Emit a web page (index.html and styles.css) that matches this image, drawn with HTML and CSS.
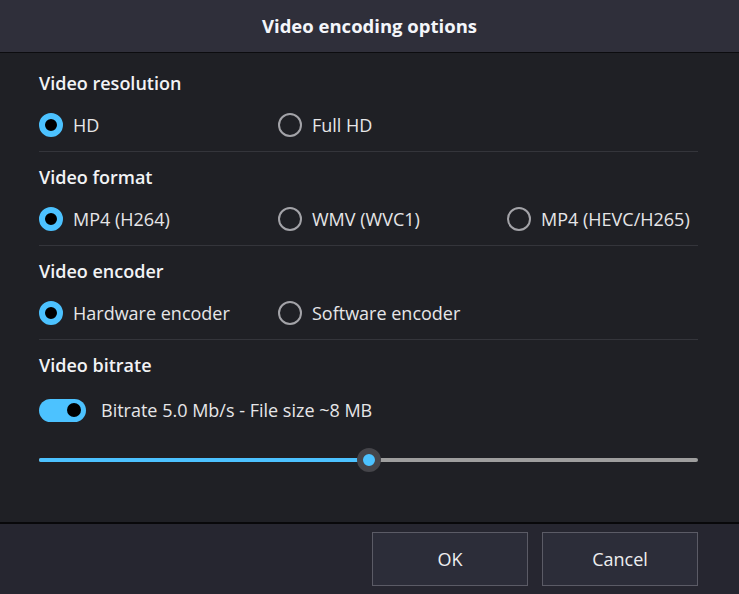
FILE: index.html
```html
<!DOCTYPE html>
<html lang="en">
<head>
    <meta charset="UTF-8">
    <meta name="viewport" content="width=device-width, initial-scale=1.0">
    <title>Video encoding options</title>
    <link rel="stylesheet" href="styles.css">
</head>
<body>
    <div class="dialog">
        <div class="header">Video encoding options</div>

        <div class="content">
            <!-- Resolution -->
            <div class="section">
                <h3>Video resolution</h3>
                <div class="options">
                    <label class="radio checked"><span class="dot"></span>HD</label>
                    <label class="radio"><span class="dot"></span>Full HD</label>
                </div>
            </div>

            <!-- Format -->
            <div class="section">
                <h3>Video format</h3>
                <div class="options">
                    <label class="radio checked"><span class="dot"></span>MP4 (H264)</label>
                    <label class="radio"><span class="dot"></span>WMV (WVC1)</label>
                    <label class="radio"><span class="dot"></span>MP4 (HEVC/H265)</label>
                </div>
            </div>

            <!-- Encoder -->
            <div class="section">
                <h3>Video encoder</h3>
                <div class="options">
                    <label class="radio checked"><span class="dot"></span>Hardware encoder</label>
                    <label class="radio"><span class="dot"></span>Software encoder</label>
                </div>
            </div>

            <!-- Bitrate -->
            <div class="section last">
                <h3>Video bitrate</h3>
                <div class="toggle-row">
                    <span class="toggle"><span class="knob"></span></span>
                    Bitrate 5.0 Mb/s - File size ~8 MB
                </div>
                <div class="slider">
                    <div class="fill" style="width: 50%"></div>
                    <div class="thumb"></div>
                </div>
            </div>
        </div>

        <div class="footer">
            <button>OK</button>
            <button>Cancel</button>
        </div>
    </div>
</body>
</html>
```

FILE: styles.css
```css
body {
    margin: 0;
    background-color: #1f2025;
    font-family: "Open Sans", "Noto Sans", sans-serif;
    color: #e6e6e8;
}
.dialog {
    width: 739px;
    height: 594px;
    display: flex;
    flex-direction: column;
}
.header {
    height: 52px;
    line-height: 52px;
    background-color: #2f2f3a;
    border-bottom: 1px solid #0c0c0f;
    text-align: center;
    font-size: 18.5px;
    font-weight: 700;
    color: #f4f6fa;
}
.content {
    flex: 1;
    padding: 5px 41px 0 39px;
}
.section {
    padding: 13px 0 12px;
    border-bottom: 1px solid #34353b;
}
.section.last {
    border-bottom: none;
}
h3 {
    margin: 0;
    font-size: 18px;
    line-height: 24px;
    font-weight: 600;
    color: #f2f3f5;
}
.options {
    display: grid;
    grid-template-columns: 239px 229px 1fr;
    margin-top: 16px;
}
.radio {
    display: flex;
    align-items: center;
    gap: 10px;
    height: 28px;
    font-size: 18px;
}
.dot {
    box-sizing: border-box;
    flex: none;
    width: 24px;
    height: 24px;
    border-radius: 50%;
    border: 2px solid #a3a3a8;
}
.radio.checked .dot {
    border: 6px solid #4cc2ff;
    background-color: #000;
}
.toggle-row {
    display: flex;
    align-items: center;
    gap: 15px;
    height: 28px;
    margin-top: 19px;
    font-size: 18px;
}
.toggle {
    width: 47px;
    height: 23px;
    border-radius: 12px;
    background-color: #4cc2ff;
    display: flex;
    align-items: center;
    justify-content: flex-end;
    padding-right: 5px;
    box-sizing: border-box;
}
.knob {
    width: 14px;
    height: 14px;
    border-radius: 50%;
    background-color: #000;
}
.slider {
    position: relative;
    height: 4px;
    margin-top: 34px;
    border-radius: 2px;
    background-color: #9e9e9e;
}
.fill {
    height: 4px;
    border-radius: 2px;
    background-color: #4cc2ff;
}
.thumb {
    position: absolute;
    left: 50%;
    top: 50%;
    width: 12px;
    height: 12px;
    margin: -12px 0 0 -12px;
    border: 6px solid #45454a;
    border-radius: 50%;
    background-color: #4cc2ff;
}
.footer {
    height: 72px;
    border-top: 2px solid #08080a;
    background-color: #262630;
    display: flex;
    justify-content: flex-end;
    align-items: flex-start;
    gap: 14px;
    padding: 8px 41px 0 0;
    box-sizing: border-box;
}
button {
    width: 156px;
    height: 54px;
    background-color: #2c2d39;
    border: 1px solid #5b5b66;
    color: #eeeef0;
    font-family: inherit;
    font-size: 18px;
    cursor: pointer;
}
```
